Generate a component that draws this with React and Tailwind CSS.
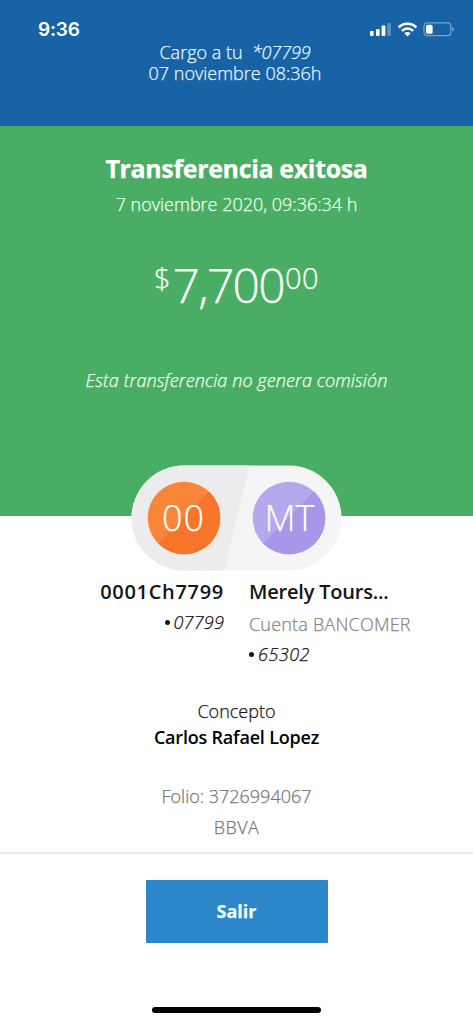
import React from "react";

function StatusIcons() {
  return (
    <svg className="block h-4 w-[86px]" viewBox="0 0 86 16" fill="none">
      <rect x="1" y="10" width="3.6" height="5" rx="1" fill="#fff" />
      <rect x="7" y="8" width="3.6" height="7" rx="1" fill="#fff" />
      <rect x="12.6" y="4.5" width="3.8" height="10.5" rx="1" fill="#fff" />
      <rect x="18.3" y="2" width="3.6" height="13" rx="1" fill="#fff" fillOpacity="0.3" />
      <g stroke="#fff" strokeWidth="2.6">
        <path d="M29.7 6.5a12.3 12.3 0 0 1 17.6 0" />
        <path d="M32.9 9.9a7.8 7.8 0 0 1 11.2 0" />
      </g>
      <path d="M35.3 12.2a4.6 4.6 0 0 1 6.4 0L38.5 15.4Z" fill="#fff" />
      <rect x="55" y="1.8" width="26.8" height="12.8" rx="3.3" stroke="#fff" strokeOpacity="0.42" strokeWidth="1.2" />
      <rect x="57" y="3.8" width="6.6" height="9" rx="1.6" fill="#fff" />
      <path d="M83.3 6v4.4q1.6-.7 1.6-2.2T83.3 6Z" fill="#fff" fillOpacity="0.45" />
    </svg>
  );
}

function Avatars() {
  return (
    <svg className="block h-[106px] w-[212px]" viewBox="0 0 212 106">
      <defs>
        <clipPath id="pill"><rect x="0.5" y="0.5" width="210" height="105" rx="52.5" /></clipPath>
        <clipPath id="from"><circle cx="53" cy="53" r="36.3" /></clipPath>
        <clipPath id="to"><circle cx="158" cy="53" r="36.3" /></clipPath>
      </defs>
      <g clipPath="url(#pill)">
        <rect width="212" height="106" fill="#f5f5f5" />
        <path d="M0 0H118.5L93 106H0Z" fill="#ececec" />
      </g>
      <g clipPath="url(#from)">
        <rect x="16" y="16" width="74" height="74" fill="#f88638" />
        <path d="M90 16H88L16 90H90Z" fill="#f6752b" />
      </g>
      <g clipPath="url(#to)">
        <rect x="121" y="16" width="74" height="74" fill="#b6a8ed" />
        <path d="M195 16H193L121 90H195Z" fill="#a896e8" />
      </g>
    </svg>
  );
}

export default function App() {
  return (
    <main className="flex h-[1024px] w-full flex-col bg-white text-center font-['Open_Sans',sans-serif] text-[18px] font-light whitespace-nowrap [-webkit-text-stroke-width:0.25px]">
      <header className="h-[126px] bg-[#1763a6] text-[#e4f7ff]">
        <div className="flex h-[42px] items-end justify-between pr-[18px] pl-[38px]">
          <span className="h-6 font-['Inter',sans-serif] text-[19px] leading-6 font-semibold tracking-[-0.2px] text-white [-webkit-text-stroke-width:0px]">9:36</span>
          <span className="pb-[5px]"><StatusIcons /></span>
        </div>
        <div className="flex h-[21px] justify-center pr-[3px] leading-[21px]">
          <span>Cargo a tu&nbsp; <i className="tracking-[-0.1px]">*07799</i></span>
        </div>
        <p className="pr-[3px] leading-[21px]">07 noviembre 08:36h</p>
      </header>

      <section className="h-[390px] bg-[#49ae64] pt-[25px] text-[#effff0]">
        <h1 className="text-[25px] leading-[34px] font-bold tracking-[-0.35px] text-white">Transferencia exitosa</h1>
        <p className="mt-[7px] leading-6">7 noviembre 2020, 09:36:34 h</p>
        <div className="mt-[37px] flex h-[64px] justify-center font-light text-white">
          <span className="mr-[2px] text-[29px] leading-[50px]">$</span>
          <span className="text-[48px] leading-[64px] tracking-[-1.7px]">7,700</span>
          <span className="ml-[1px] text-[29px] leading-[50px] tracking-[0.4px]">00</span>
        </div>
        <p className="mt-[51px] leading-6 tracking-[0.1px] italic">Esta transferencia no genera comisión</p>
      </section>

      <section className="h-[336px] text-[#151515]">
        <div className="relative mx-auto -mt-[51px] h-[106px] w-[212px]">
          <Avatars />
          <div className="absolute inset-0 grid grid-cols-2 items-center text-[36px] leading-[48px] text-white">
            <span className="tracking-[1px]">00</span>
            <span>MT</span>
          </div>
        </div>
        <div className="grid grid-cols-[224px_1fr] gap-x-[25px] pt-[7px]">
          <div className="text-right">
            <p className="text-[20px] leading-[28px] font-semibold tracking-[0.7px] [-webkit-text-stroke-width:0px]">0001Ch7799</p>
            <p className="flex h-[32px] items-center justify-end gap-[3px] italic">
              <span className="size-[5px] rounded-full bg-[#151515]" />
              <span className="tracking-[0.2px]">07799</span>
            </p>
          </div>
          <div className="text-left">
            <p className="text-[20px] leading-[28px] font-semibold tracking-[-0.2px] [-webkit-text-stroke-width:0px]">Merely Tours...</p>
            <p className="leading-[36px] tracking-[0.2px] text-[#858585]">Cuenta BANCOMER</p>
            <p className="flex h-[24px] items-center gap-[4px] italic">
              <span className="size-[5px] rounded-full bg-[#151515]" />
              <span className="tracking-[0.5px]">65302</span>
            </p>
          </div>
        </div>
        <div className="pt-[32px]">
          <p className="leading-[26px]">Concepto</p>
          <p className="leading-[26px] font-semibold tracking-[-0.2px] text-black [-webkit-text-stroke-width:0px]">Carlos Rafael Lopez</p>
          <p className="mt-[31px] leading-[31px] text-[#777777]">Folio: 3726994067</p>
          <p className="leading-[31px] tracking-[0.4px] text-[#777777]">BBVA</p>
        </div>
      </section>

      <footer className="flex h-[172px] flex-col items-center border-t-2 border-[#ebebeb]">
        <button className="mt-[26px] h-[63px] w-[182px] rounded-[1px] bg-[#2b86ca] text-[18px] font-bold text-[#eafaff]">Salir</button>
        <div className="mt-[64px] h-[6px] w-[169px] rounded-full bg-black" />
      </footer>
    </main>
  );
}
